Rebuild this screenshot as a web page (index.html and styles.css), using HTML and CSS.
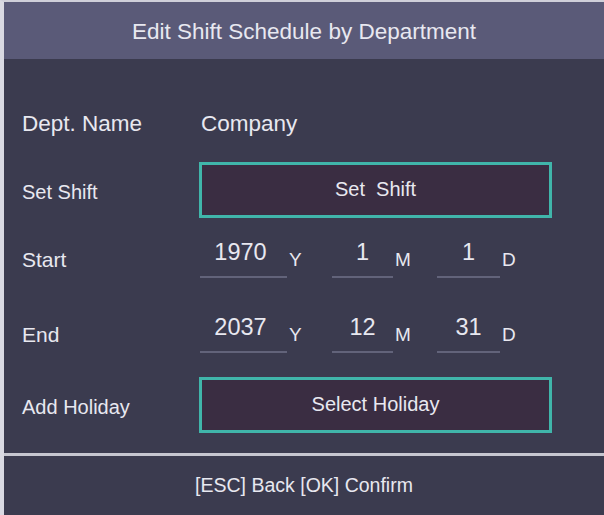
FILE: index.html
```html
<!DOCTYPE html>
<html lang="en">
<head>
  <meta charset="UTF-8">
  <meta name="viewport" content="width=device-width, initial-scale=1" />
  <title>Edit Shift Schedule by Department</title>
  <link rel="stylesheet" href="styles.css">
</head>
<body>
  <div class="screen">
    <div class="title-bar">Edit Shift Schedule by Department</div>

    <div class="form">
      <div class="row row-dept">
        <span class="label">Dept. Name</span>
        <span class="value">Company</span>
      </div>

      <div class="row row-shift">
        <span class="label">Set Shift</span>
        <div class="select-box">Set&nbsp; Shift</div>
      </div>

      <div class="row row-start">
        <span class="label">Start</span>
        <div class="date">
          <span class="field field-year">1970</span><span class="unit">Y</span>
          <span class="field field-month">1</span><span class="unit">M</span>
          <span class="field field-day">1</span><span class="unit">D</span>
        </div>
      </div>

      <div class="row row-end">
        <span class="label">End</span>
        <div class="date">
          <span class="field field-year">2037</span><span class="unit">Y</span>
          <span class="field field-month">12</span><span class="unit">M</span>
          <span class="field field-day">31</span><span class="unit">D</span>
        </div>
      </div>

      <div class="row row-holiday">
        <span class="label">Add Holiday</span>
        <div class="select-box">Select Holiday</div>
      </div>
    </div>

    <div class="footer">[ESC] Back [OK] Confirm</div>
  </div>
</body>
</html>
```

FILE: styles.css
```css
body {
  margin: 0;
  padding: 0;
  font-family: 'Liberation Sans', Arial, sans-serif;
  background-color: #3b3b4f;
  color: #e8e8f0;
}

.screen {
  width: 604px;
  height: 515px;
  box-sizing: border-box;
  border-left: 4px solid #d9d9e2;
  border-top: 2px solid #cfcfd9;
  display: flex;
  flex-direction: column;
}

.title-bar {
  height: 57px;
  background-color: #5a5a78;
  display: flex;
  align-items: center;
  justify-content: center;
  font-size: 22.5px;
  padding-top: 3px;
  box-sizing: border-box;
}

.form {
  flex: 1;
  background-color: #3b3b4f;
  padding-left: 18px;
  padding-top: 37px;
  box-sizing: border-box;
}

.row {
  display: flex;
  align-items: center;
  height: 56px;
  font-size: 20px;
}

.row-shift { margin-top: 10px; }
.row-start { margin-top: 12px; }
.row-end { margin-top: 19px; }
.row-holiday { margin-top: 16px; }

.label {
  width: 177px;
  flex-shrink: 0;
  padding-top: 4px;
  font-size: 20px;
}

.row-dept .label {
  font-size: 22.5px;
  padding-top: 0;
}

.row-start .label,
.row-end .label {
  font-size: 21px;
}

.value {
  font-size: 22.5px;
  padding-left: 2px;
}

.select-box {
  width: 353px;
  height: 56px;
  box-sizing: border-box;
  border: 3px solid #40b5aa;
  background-color: #3a2d42;
  display: flex;
  align-items: center;
  justify-content: center;
  padding-bottom: 1px;
  font-size: 20px;
}

.date {
  display: flex;
  align-items: center;
  padding-left: 1px;
}

.field {
  height: 40px;
  box-sizing: border-box;
  border-bottom: 2px solid #62637a;
  text-align: center;
  font-size: 23.5px;
  line-height: 26px;
  padding-top: 1px;
}

.field-year { width: 87px; padding-right: 6px; }
.field-month { width: 61px; }
.field-day { width: 63px; }

.unit {
  font-size: 19px;
  padding-top: 4px;
  padding-left: 2px;
}

.unit:nth-child(2) { width: 43px; }
.unit:nth-child(4) { width: 42px; }

.footer {
  height: 62px;
  box-sizing: border-box;
  border-top: 3px solid #c6c6d0;
  background-color: #3b3b4f;
  display: flex;
  align-items: center;
  justify-content: center;
  font-size: 19.5px;
}
```
